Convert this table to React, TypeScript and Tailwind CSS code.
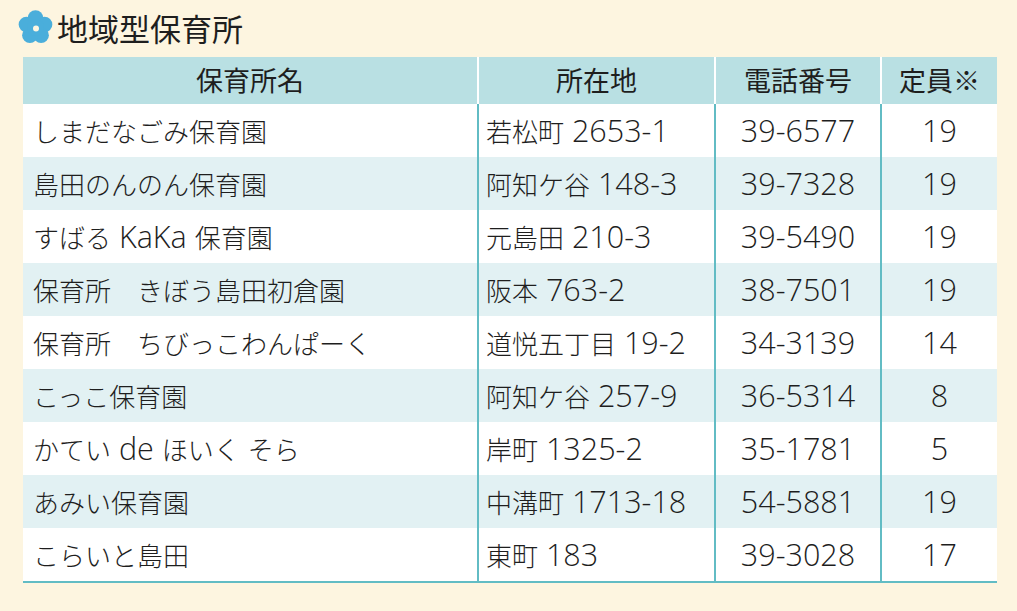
import React from "react";

const rows = [
  ["しまだなごみ保育園", "若松町 2653-1", "39-6577", "19"],
  ["島田のんのん保育園", "阿知ケ谷 148-3", "39-7328", "19"],
  ["すばる KaKa 保育園", "元島田 210-3", "39-5490", "19"],
  ["保育所　きぼう島田初倉園", "阪本 763-2", "38-7501", "19"],
  ["保育所　ちびっこわんぱーく", "道悦五丁目 19-2", "34-3139", "14"],
  ["こっこ保育園", "阿知ケ谷 257-9", "36-5314", "8"],
  ["かてい de ほいく そら", "岸町 1325-2", "35-1781", "5"],
  ["あみい保育園", "中溝町 1713-18", "54-5881", "19"],
  ["こらいと島田", "東町 183", "39-3028", "17"],
];

// latin letters and digits use a larger, wider face than the kana/kanji
function Mixed({ text }: { text: string }) {
  const parts = text.split(/([0-9A-Za-z\- ]+)/).filter((p) => p !== "");
  return (
    <>
      {parts.map((p, i) =>
        /[0-9A-Za-z\-]/.test(p) || p === " " ? (
          <span key={i} className="text-[30.5px] font-light" style={{ fontFamily: '"Open Sans", sans-serif' }}>
            {p}
          </span>
        ) : (
          <span key={i} className="font-light">{p}</span>
        )
      )}
    </>
  );
}

function Flower() {
  const petals = [0, 72, 144, 216, 288];
  return (
    <svg width="35" height="35" viewBox="-17.5 -17.5 35 35">
      {petals.map((a) => {
        const r = (a - 90) * (Math.PI / 180);
        return <circle key={a} cx={Math.cos(r) * 9.5} cy={Math.sin(r) * 9.5} r="7.8" fill="#4aaedb" />;
      })}
      <circle cx="0" cy="0" r="8.5" fill="#4aaedb" />
      <circle cx="0.5" cy="1" r="3" fill="#fdf6e2" />
    </svg>
  );
}

export default function App() {
  return (
    <div
      className="w-[1017px] h-[611px] bg-[#fdf5e0] text-[#1e1e1e] overflow-hidden"
      style={{ fontFamily: '"Noto Sans CJK JP", "Noto Sans", sans-serif' }}
    >
      {/* TITLE */}
      <div className="flex items-center h-[57px] pl-[18px] pb-[2px]">
        <Flower />
        <span className="ml-[4px] text-[31px] leading-none">地域型保育所</span>
      </div>

      {/* TABLE */}
      <div className="ml-[23px] w-[974px] bg-white">
        <div className="grid grid-cols-[454px_237px_166px_117px] h-[47px] text-[27px]">
          <div className="bg-[#b9e0e3] flex items-center justify-center">保育所名</div>
          <div className="bg-[#b9e0e3] border-l-2 border-white flex items-center justify-center">所在地</div>
          <div className="bg-[#b9e0e3] border-l-2 border-white flex items-center justify-center">電話番号</div>
          <div className="bg-[#b9e0e3] border-l-2 border-white flex items-center justify-center">定員※</div>
        </div>
        <div className="border-b-2 border-[#62bcc4]">
          {rows.map((r, i) => (
            <div
              key={i}
              className={`grid grid-cols-[454px_237px_166px_117px] h-[53px] text-[26px] ${
                i % 2 === 1 ? "bg-[#e2f1f3]" : "bg-white"
              }`}
            >
              <div className="flex items-center pl-[10px] whitespace-nowrap">
                <span><Mixed text={r[0]} /></span>
              </div>
              <div className="border-l-2 border-[#62bcc4] flex items-center pl-[7px] whitespace-nowrap">
                <span><Mixed text={r[1]} /></span>
              </div>
              <div className="border-l-2 border-[#62bcc4] flex items-center justify-center">
                <span><Mixed text={r[2]} /></span>
              </div>
              <div className="border-l-2 border-[#62bcc4] flex items-center justify-center">
                <span><Mixed text={r[3]} /></span>
              </div>
            </div>
          ))}
        </div>
      </div>
    </div>
  );
}
